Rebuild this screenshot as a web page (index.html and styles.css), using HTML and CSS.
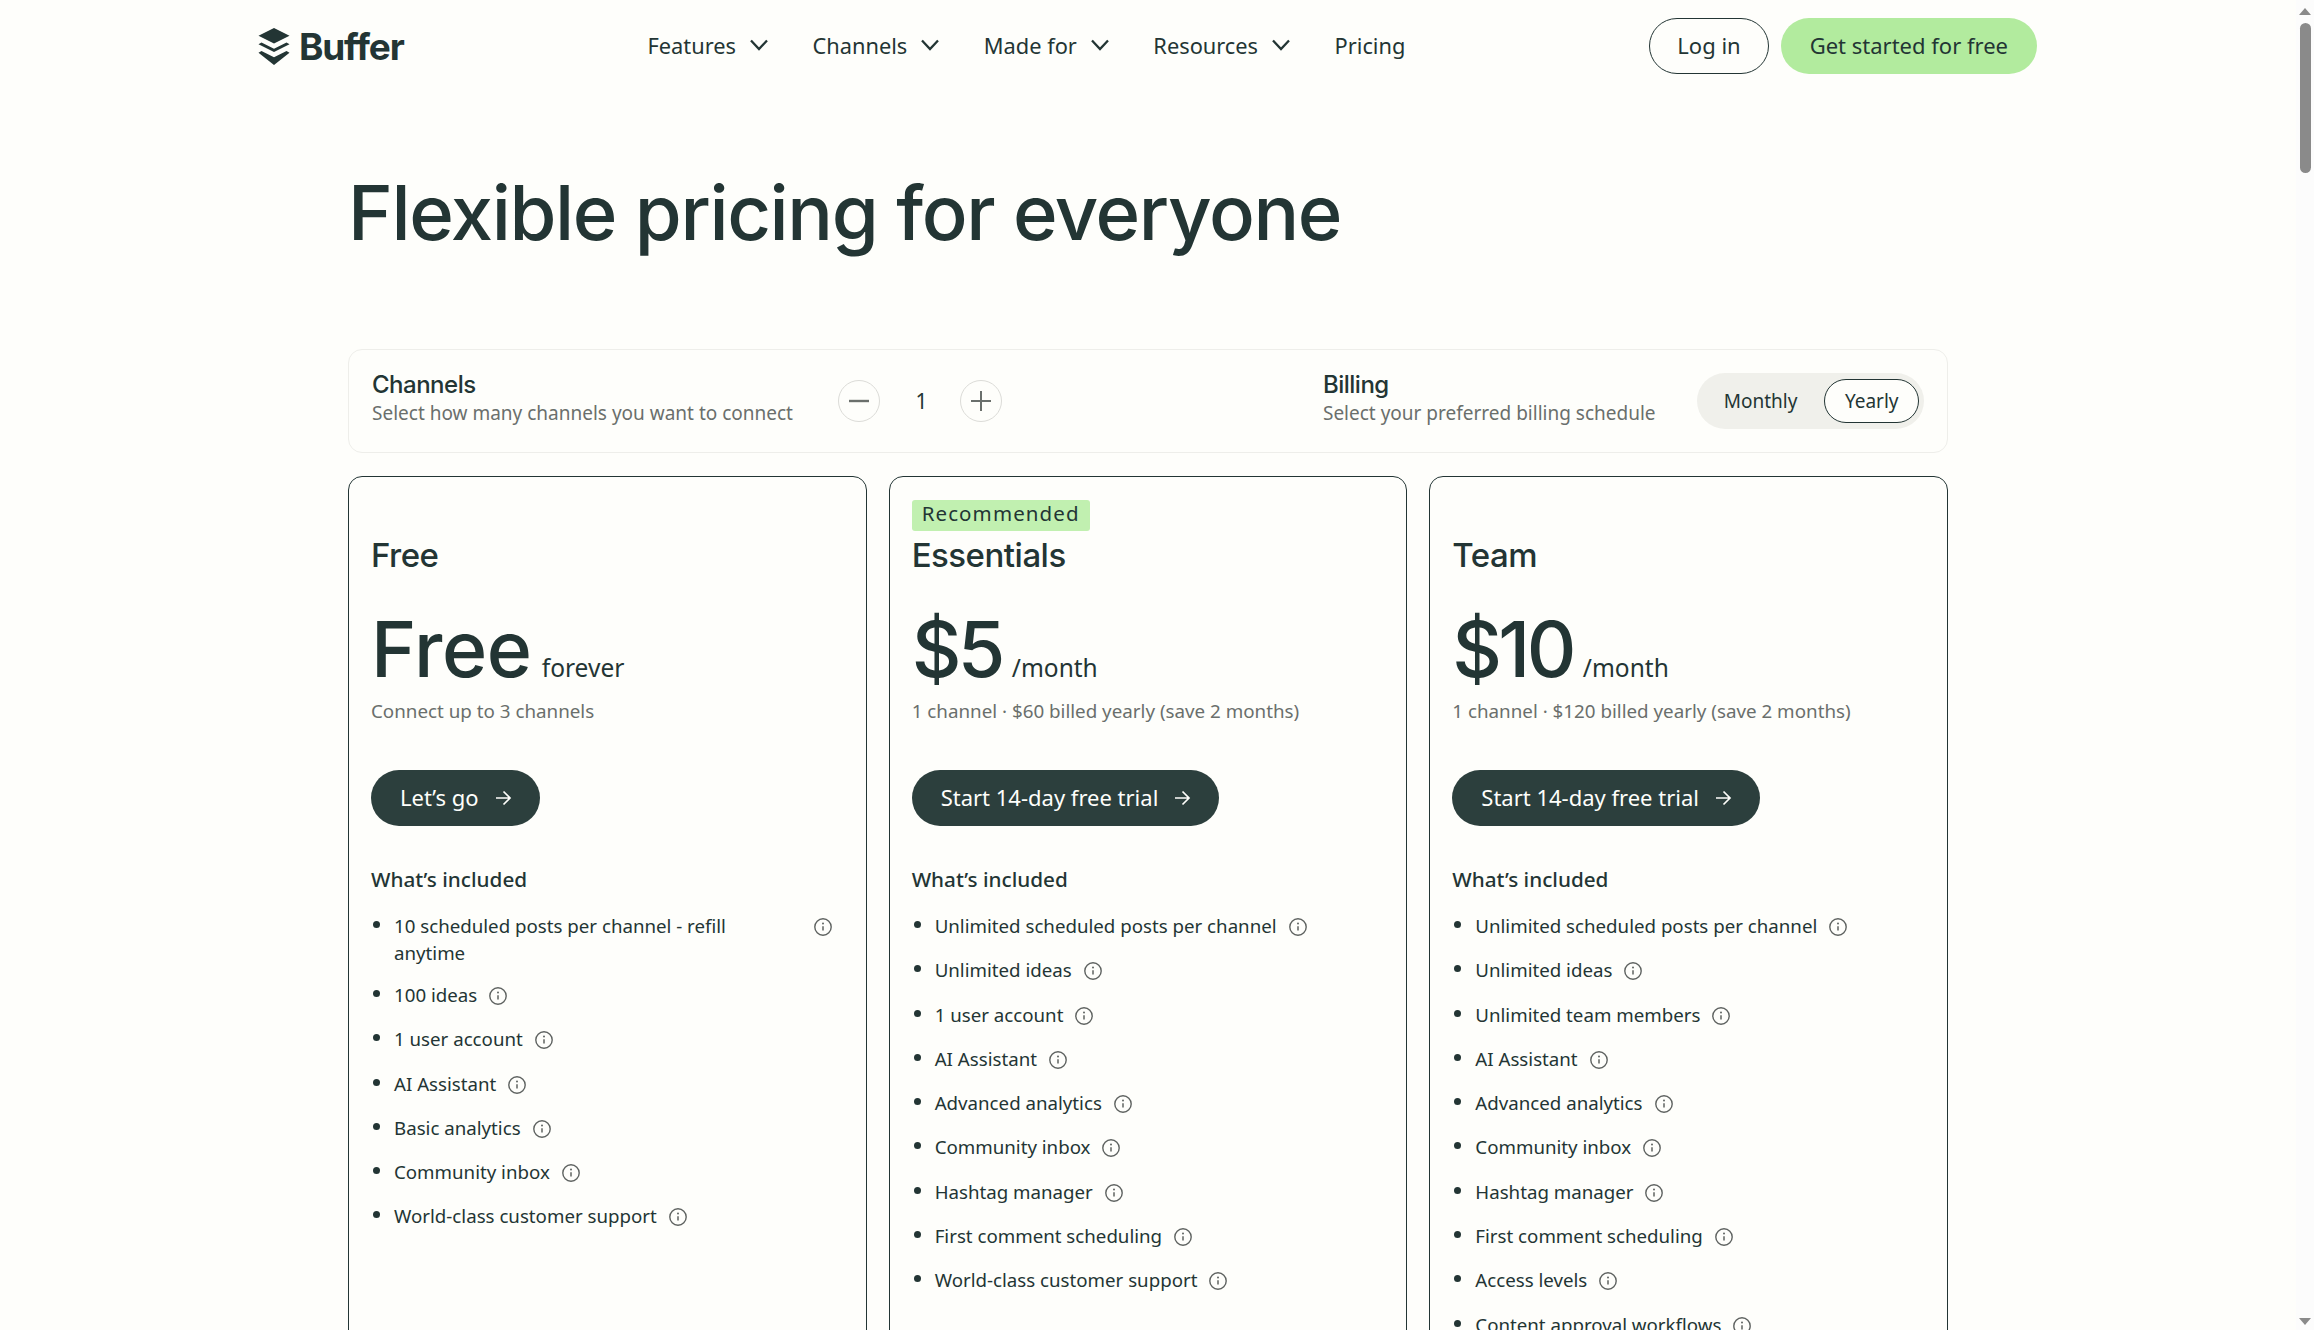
FILE: index.html

```html
<!DOCTYPE html>
<html lang="en">
<head>
    <meta charset="UTF-8">
    <meta name="viewport" content="width=device-width, initial-scale=1.0">
    <title>Buffer Pricing</title>
    <link rel="stylesheet" href="styles.css">
</head>
<body>
    <svg class="sprite" width="0" height="0">
        <symbol id="info" viewBox="0 0 20 20">
            <circle cx="10" cy="10" r="8.2" fill="none" stroke="currentColor" stroke-width="1.4"/>
            <path d="M10 9.2v4.4" fill="none" stroke="currentColor" stroke-width="1.5"/>
            <circle cx="10" cy="6.6" r="1" fill="currentColor"/>
        </symbol>
        <symbol id="chevron" viewBox="0 0 20 20">
            <path d="M2 5.5l8 8.500 8-8.500" fill="none" stroke="currentColor" stroke-width="2.300"/>
        </symbol>
        <symbol id="arrow" viewBox="0 0 20 20">
            <path d="M3 10h14M10.500 3.500L17 10l-6.500 6.500" fill="none" stroke="currentColor" stroke-width="1.700"/>
        </symbol>
    </svg>
    <div class="window">
        <div class="page">
            <header class="nav">
                <a href="#" class="logo">
                    <svg width="32" height="37" viewBox="0 0 32 37">
                        <path d="M16 0l15.500 7.800L16 15.500.5 7.800z" fill="currentColor"/>
                        <path d="M3.500 14.500L16 20.800l12.500-6.300 3 1.700L16 24 .5 16.200z" fill="currentColor"/>
                        <path d="M3.500 23L16 29.300 28.500 23l3 1.700L16 37 .5 24.700z" fill="currentColor"/>
                    </svg>
                    <span>Buffer</span>
                </a>
                <nav class="links">
                    <a href="#">Features <svg class="chev"><use href="#chevron"/></svg></a>
                    <a href="#">Channels <svg class="chev"><use href="#chevron"/></svg></a>
                    <a href="#">Made for <svg class="chev"><use href="#chevron"/></svg></a>
                    <a href="#">Resources <svg class="chev"><use href="#chevron"/></svg></a>
                    <a href="#">Pricing</a>
                </nav>
                <div class="actions">
                    <a href="#" class="btn btn-outline">Log in</a>
                    <a href="#" class="btn btn-green">Get started for free</a>
                </div>
            </header>

            <main class="content">
                <h1>Flexible pricing for everyone</h1>

                <section class="controls">
                    <div class="control-text">
                        <h2>Channels</h2>
                        <p>Select how many channels you want to connect</p>
                    </div>
                    <div class="stepper">
                        <button class="round">
                            <svg width="22" height="22" viewBox="0 0 22 22"><path d="M1 11h20" stroke="currentColor" stroke-width="2.400"/></svg>
                        </button>
                        <span class="count">1</span>
                        <button class="round">
                            <svg width="22" height="22" viewBox="0 0 22 22"><path d="M1 11h20M11 1v20" stroke="currentColor" stroke-width="2"/></svg>
                        </button>
                    </div>
                    <div class="control-text billing">
                        <h2>Billing</h2>
                        <p>Select your preferred billing schedule</p>
                    </div>
                    <div class="toggle">
                        <span class="toggle-item">Monthly</span>
                        <span class="toggle-item active">Yearly</span>
                    </div>
                </section>

                <section class="plans">
                    <article class="card">
                        <div class="tag-slot"></div>
                        <h3>Free</h3>
                        <div class="price"><strong class="word">Free</strong> <span>forever</span></div>
                        <p class="note">Connect up to 3 channels</p>
                        <a href="#" class="cta">Let’s go <svg class="arrow"><use href="#arrow"/></svg></a>
                        <h4>What’s included</h4>
                        <ul class="features">
                            <li class="wide"><span>10 scheduled posts per channel - refill anytime</span><svg class="info"><use href="#info"/></svg></li>
                            <li><span>100 ideas</span><svg class="info"><use href="#info"/></svg></li>
                            <li><span>1 user account</span><svg class="info"><use href="#info"/></svg></li>
                            <li><span>AI Assistant</span><svg class="info"><use href="#info"/></svg></li>
                            <li><span>Basic analytics</span><svg class="info"><use href="#info"/></svg></li>
                            <li><span>Community inbox</span><svg class="info"><use href="#info"/></svg></li>
                            <li><span>World-class customer support</span><svg class="info"><use href="#info"/></svg></li>
                        </ul>
                    </article>

                    <article class="card">
                        <div class="tag-slot"><span class="tag">Recommended</span></div>
                        <h3>Essentials</h3>
                        <div class="price"><strong>$5</strong> <span>/month</span></div>
                        <p class="note">1 channel · $60 billed yearly (save 2 months)</p>
                        <a href="#" class="cta">Start 14-day free trial <svg class="arrow"><use href="#arrow"/></svg></a>
                        <h4>What’s included</h4>
                        <ul class="features">
                            <li><span>Unlimited scheduled posts per channel</span><svg class="info"><use href="#info"/></svg></li>
                            <li><span>Unlimited ideas</span><svg class="info"><use href="#info"/></svg></li>
                            <li><span>1 user account</span><svg class="info"><use href="#info"/></svg></li>
                            <li><span>AI Assistant</span><svg class="info"><use href="#info"/></svg></li>
                            <li><span>Advanced analytics</span><svg class="info"><use href="#info"/></svg></li>
                            <li><span>Community inbox</span><svg class="info"><use href="#info"/></svg></li>
                            <li><span>Hashtag manager</span><svg class="info"><use href="#info"/></svg></li>
                            <li><span>First comment scheduling</span><svg class="info"><use href="#info"/></svg></li>
                            <li><span>World-class customer support</span><svg class="info"><use href="#info"/></svg></li>
                        </ul>
                    </article>

                    <article class="card">
                        <div class="tag-slot"></div>
                        <h3>Team</h3>
                        <div class="price"><strong>$10</strong> <span>/month</span></div>
                        <p class="note">1 channel · $120 billed yearly (save 2 months)</p>
                        <a href="#" class="cta">Start 14-day free trial <svg class="arrow"><use href="#arrow"/></svg></a>
                        <h4>What’s included</h4>
                        <ul class="features">
                            <li><span>Unlimited scheduled posts per channel</span><svg class="info"><use href="#info"/></svg></li>
                            <li><span>Unlimited ideas</span><svg class="info"><use href="#info"/></svg></li>
                            <li><span>Unlimited team members</span><svg class="info"><use href="#info"/></svg></li>
                            <li><span>AI Assistant</span><svg class="info"><use href="#info"/></svg></li>
                            <li><span>Advanced analytics</span><svg class="info"><use href="#info"/></svg></li>
                            <li><span>Community inbox</span><svg class="info"><use href="#info"/></svg></li>
                            <li><span>Hashtag manager</span><svg class="info"><use href="#info"/></svg></li>
                            <li><span>First comment scheduling</span><svg class="info"><use href="#info"/></svg></li>
                            <li><span>Access levels</span><svg class="info"><use href="#info"/></svg></li>
                            <li><span>Content approval workflows</span><svg class="info"><use href="#info"/></svg></li>
                        </ul>
                    </article>
                </section>
            </main>
        </div>
        <div class="scrollbar">
            <div class="scroll-up"></div>
            <div class="scroll-thumb"></div>
            <div class="scroll-down"></div>
        </div>
    </div>
</body>
</html>
```

FILE: styles.css

```css
* {
    box-sizing: border-box;
}
body {
    font-family: "Noto Sans", Arial, sans-serif;
    margin: 0;
    padding: 0;
    background-color: #fefefb;
    color: #233534;
}
a {
    color: inherit;
    text-decoration: none;
}
.sprite {
    position: absolute;
}
.window {
    display: flex;
    height: 100vh;
    overflow: hidden;
}
.page {
    flex: 1;
    min-width: 0;
}
.nav {
    display: flex;
    align-items: center;
    justify-content: space-between;
    height: 92px;
    padding: 0 259px 0 258px;
}
.logo {
    display: flex;
    align-items: center;
    gap: 9px;
    font-family: Inter, sans-serif;
    font-size: 37px;
    font-weight: 700;
    letter-spacing: -1.200px;
}
.links {
    display: flex;
    gap: 43.500px;
    padding-bottom: 2px;
    font-size: 21.800px;
}
.links a {
    display: flex;
    align-items: center;
    gap: 13px;
}
.chev {
    width: 20px;
    height: 20px;
}
.actions {
    display: flex;
    gap: 12px;
}
.btn {
    display: flex;
    align-items: center;
    height: 56px;
    padding: 0 29px 2px;
    border-radius: 28px;
    font-size: 22px;
}
.btn-outline {
    padding: 0 27px 2px;
    border: 1.500px solid #233534;
}
.btn-green {
    background-color: #b2eb9e;
}
.content {
    width: 1600px;
    margin: 0 auto;
}
h1 {
    margin: 70px 0 0;
    height: 187px;
    font-family: Inter, sans-serif;
    font-size: 76px;
    font-weight: 500;
    line-height: 100px;
    letter-spacing: -1.400px;
}
.controls {
    display: flex;
    align-items: center;
    height: 104px;
    padding: 0 23px;
    border: 1.500px solid #eeeeea;
    border-radius: 14px;
}
.control-text {
    margin-bottom: 6px;
}
.control-text h2 {
    margin: 0;
    font-family: Inter, sans-serif;
    font-size: 24px;
    font-weight: 500;
    line-height: 30px;
    letter-spacing: -0.500px;
}
.control-text p {
    margin: 0;
    font-size: 19px;
    line-height: 26px;
    color: #6a6f6c;
}
.stepper {
    display: flex;
    align-items: center;
    margin-left: 45.500px;
}
.round {
    display: flex;
    align-items: center;
    justify-content: center;
    width: 42px;
    height: 42px;
    padding: 0;
    border: 1.500px solid #dcdcd8;
    border-radius: 50%;
    background: none;
    color: #6a6f6c;
}
.count {
    width: 80px;
    padding-left: 2px;
    text-align: center;
    font-size: 21px;
}
.billing {
    margin-left: 320.500px;
}
.toggle {
    display: flex;
    align-items: center;
    gap: 6px;
    margin-left: auto;
    height: 56px;
    padding: 0 5px 0 6px;
    border-radius: 28px;
    background-color: #f0f0eb;
    font-size: 19px;
}
.toggle-item {
    display: flex;
    align-items: center;
    height: 44px;
    padding: 0 21px;
    border-radius: 22px;
}
.toggle-item.active {
    padding: 0 19.500px;
    background-color: #fefefb;
    border: 1.500px solid #233534;
}
.plans {
    display: grid;
    grid-template-columns: repeat(3, 1fr);
    gap: 22px;
    margin-top: 23px;
}
.card {
    padding: 23px 22px 60px;
    border: 1.500px solid #233534;
    border-radius: 14px;
}
.tag-slot {
    height: 31px;
}
.tag {
    display: inline-block;
    height: 31px;
    padding: 0 10px;
    border-radius: 3px;
    background-color: #c1f0b0;
    font-size: 20.500px;
    line-height: 26px;
    letter-spacing: 1.100px;
}
h3 {
    margin: 4px 0 0;
    font-family: Inter, sans-serif;
    font-size: 33px;
    font-weight: 500;
    line-height: 40px;
    letter-spacing: -0.500px;
}
.price {
    margin-top: 28px;
    height: 92px;
    line-height: 92px;
}
.price strong {
    font-family: Inter, sans-serif;
    font-size: 77px;
    font-weight: 500;
    letter-spacing: -3.700px;
}
.price strong.word {
    letter-spacing: -0.400px;
}
.price span {
    margin-left: 6px;
    font-size: 24.500px;
}
.note {
    margin: 3px 0 0;
    font-size: 18.800px;
    line-height: 26px;
    color: #6a6f6c;
}
.cta {
    display: inline-flex;
    align-items: center;
    gap: 14px;
    height: 56px;
    margin-top: 46px;
    padding: 0 27px 2px 29px;
    border-radius: 28px;
    background-color: #2c3f3d;
    color: #fefefb;
    font-size: 22px;
}
.arrow {
    width: 20px;
    height: 20px;
    margin-top: 2px;
}
h4 {
    margin: 39px 0 0;
    font-family: "Noto Sans", sans-serif;
    font-size: 20.700px;
    font-weight: 500;
    line-height: 28px;
}
.features {
    list-style: none;
    margin: 19px 0 0;
    padding: 0;
}
.features li {
    position: relative;
    display: flex;
    align-items: flex-start;
    gap: 11px;
    padding-left: 23px;
    margin-bottom: 17.300px;
    font-size: 18.700px;
    line-height: 27px;
}
.features li::before {
    content: "";
    position: absolute;
    left: 2px;
    top: 9px;
    width: 7px;
    height: 7px;
    border-radius: 50%;
    background-color: #233534;
}
.features li.wide {
    justify-content: space-between;
    margin-bottom: 15px;
    padding-right: 11px;
}
.features li.wide span {
    width: 360px;
}
.info {
    flex: none;
    width: 20px;
    height: 20px;
    margin-top: 5px;
    color: #5f6361;
}
.scrollbar {
    display: flex;
    flex: none;
    flex-direction: column;
    align-items: center;
    width: 18px;
    background-color: #fcfcfc;
}
.scroll-up {
    margin-top: 8px;
    border-left: 6px solid transparent;
    border-right: 6px solid transparent;
    border-bottom: 7px solid #8a8a8a;
}
.scroll-thumb {
    width: 11px;
    height: 150px;
    margin-top: 8px;
    border-radius: 6px;
    background-color: #8a8a8a;
}
.scroll-down {
    margin-top: auto;
    margin-bottom: 5px;
    border-left: 6px solid transparent;
    border-right: 6px solid transparent;
    border-top: 7px solid #8a8a8a;
}
```
